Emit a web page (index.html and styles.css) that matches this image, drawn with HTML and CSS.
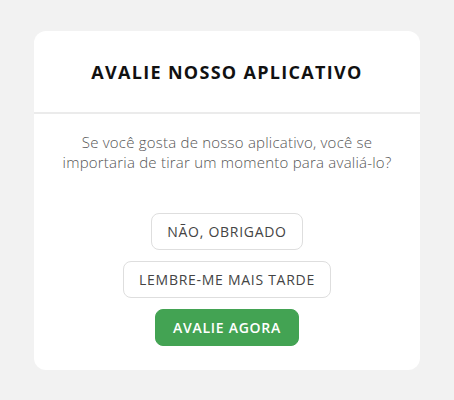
FILE: index.html
```html
<!DOCTYPE html>
<html lang="pt">
  <head>
    <meta charset="UTF-8" />
    <meta name="viewport" content="width=device-width, initial-scale=1.0" />
    <title>Avalie nosso aplicativo</title>
    <link rel="stylesheet" href="styles.css">
  </head>
  <body>
    <div class="rate-card">
      <div class="rate-header">
        <h1>AVALIE NOSSO APLICATIVO</h1>
      </div>
      <div class="rate-body">
        <p>Se você gosta de nosso aplicativo, você se importaria de tirar um momento para avaliá-lo?</p>
        <div class="actions">
          <button class="btn">NÃO, OBRIGADO</button>
          <button class="btn">LEMBRE-ME MAIS TARDE</button>
          <button class="btn btn-primary">AVALIE AGORA</button>
        </div>
      </div>
    </div>
  </body>
</html>
```

FILE: styles.css
```css
body {
  font-family: "Open Sans", "DejaVu Sans", sans-serif;
  background-color: #f2f2f2;
  margin: 0;
  padding: 31px 34px;
}
.rate-card {
  background-color: #fff;
  border-radius: 12px;
  height: 339px;
  box-sizing: border-box;
}
.rate-header {
  height: 81px;
  display: flex;
  align-items: center;
  justify-content: center;
  border-bottom: 2px solid #ebebeb;
}
.rate-header h1 {
  margin: 0;
  font-size: 18px;
  font-weight: 700;
  color: #111;
  letter-spacing: 1.3px;
}
.rate-body {
  padding: 18px 10px 24px;
  text-align: center;
}
.rate-body p {
  margin: 0 auto 41px;
  max-width: 340px;
  font-size: 15px;
  line-height: 20px;
  font-weight: 300;
  letter-spacing: 0.22px;
  color: #555;
}
.actions {
  display: flex;
  flex-direction: column;
  align-items: center;
  gap: 11px;
}
.btn {
  font-family: inherit;
  height: 37px;
  padding: 0 15px;
  border: 1px solid #dedede;
  border-radius: 8px;
  background-color: #fff;
  color: #444;
  font-size: 14px;
  font-weight: 500;
  letter-spacing: 0.72px;
  cursor: pointer;
}
.btn-primary {
  background-color: #43a353;
  border-color: #43a353;
  color: #fff;
  font-weight: 600;
  padding: 0 17px;
}
```
